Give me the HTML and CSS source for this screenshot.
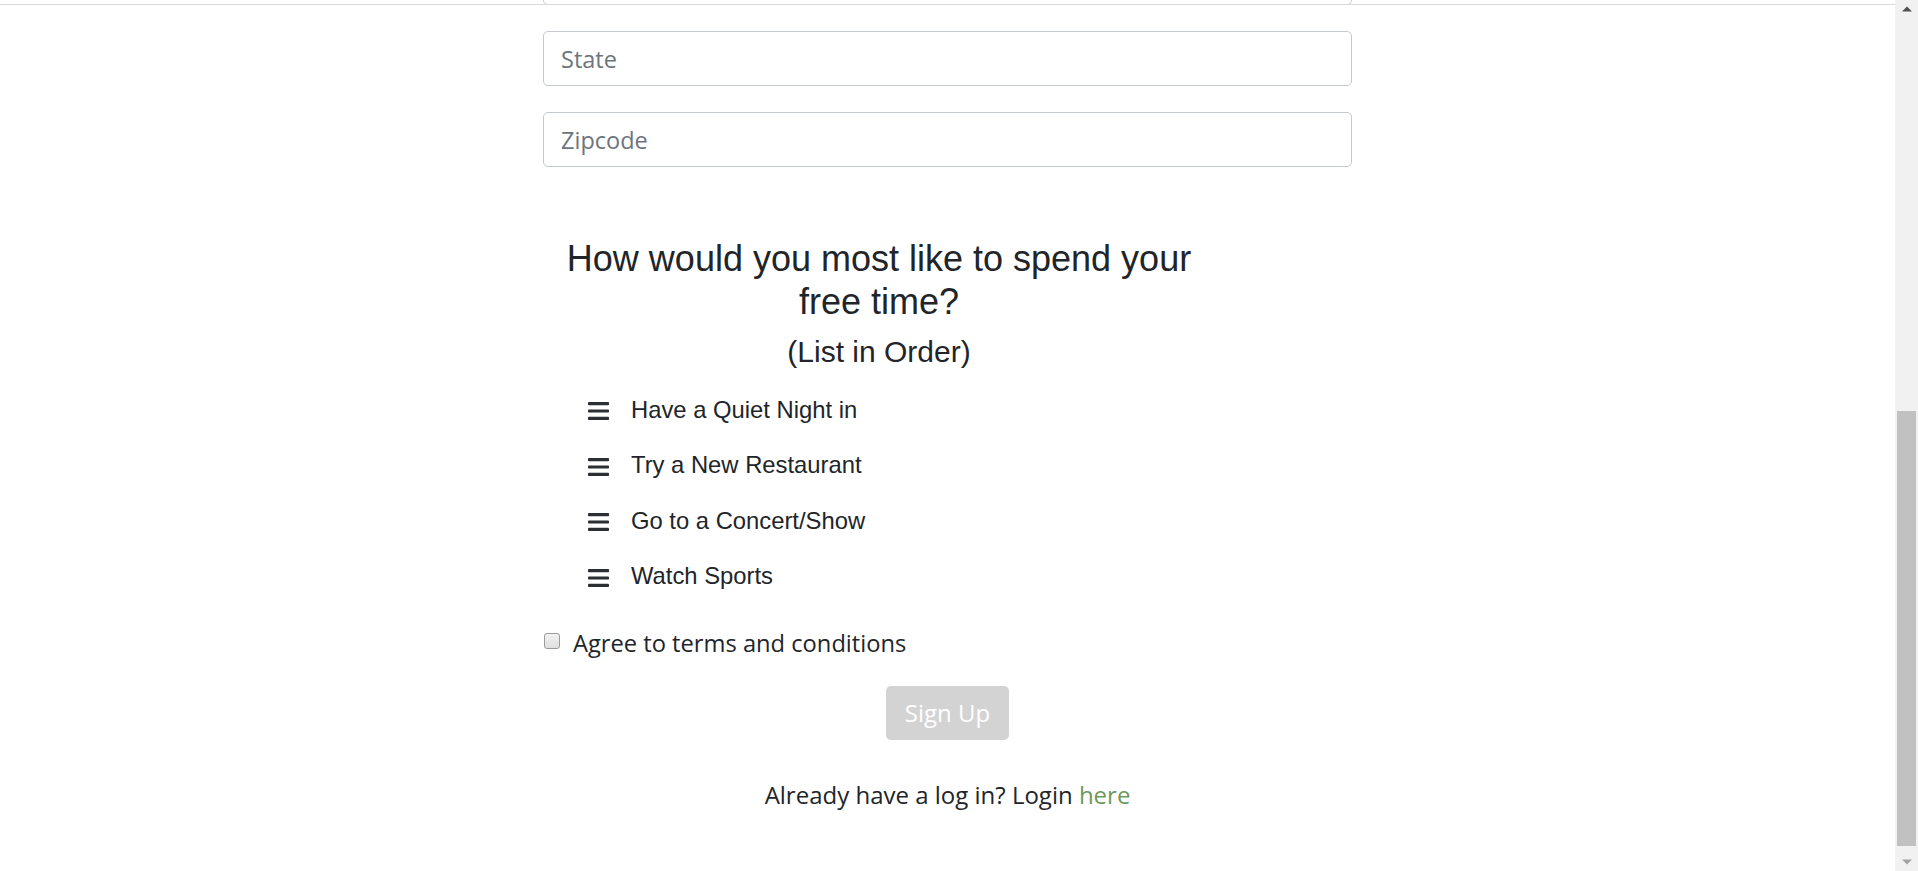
FILE: index.html
```html
<!DOCTYPE html>
<html lang="en">
<head>
<meta charset="utf-8">
<title>Sign Up</title>
<link rel="stylesheet" href="styles.css">
</head>
<body>
<div class="window">
  <main class="page">
    <div class="chrome-line"></div>
    <form class="signup">
      <div class="field-stub"></div>
      <input class="field" type="text" placeholder="State">
      <input class="field" type="text" placeholder="Zipcode">

      <section class="ranking">
        <h2 class="ranking-title">How would you most like to spend your free time?</h2>
        <h3 class="ranking-sub">(List in Order)</h3>
        <ul class="rank-list">
          <li class="rank-item">
            <svg class="handle" width="21" height="18" viewBox="0 0 21 18"><rect x="0" y="0" width="21" height="3.2" rx="0.8"/><rect x="0" y="7.4" width="21" height="3.2" rx="0.8"/><rect x="0" y="14.8" width="21" height="3.2" rx="0.8"/></svg>
            <span>Have a Quiet Night in</span>
          </li>
          <li class="rank-item">
            <svg class="handle" width="21" height="18" viewBox="0 0 21 18"><rect x="0" y="0" width="21" height="3.2" rx="0.8"/><rect x="0" y="7.4" width="21" height="3.2" rx="0.8"/><rect x="0" y="14.8" width="21" height="3.2" rx="0.8"/></svg>
            <span>Try a New Restaurant</span>
          </li>
          <li class="rank-item">
            <svg class="handle" width="21" height="18" viewBox="0 0 21 18"><rect x="0" y="0" width="21" height="3.2" rx="0.8"/><rect x="0" y="7.4" width="21" height="3.2" rx="0.8"/><rect x="0" y="14.8" width="21" height="3.2" rx="0.8"/></svg>
            <span>Go to a Concert/Show</span>
          </li>
          <li class="rank-item">
            <svg class="handle" width="21" height="18" viewBox="0 0 21 18"><rect x="0" y="0" width="21" height="3.2" rx="0.8"/><rect x="0" y="7.4" width="21" height="3.2" rx="0.8"/><rect x="0" y="14.8" width="21" height="3.2" rx="0.8"/></svg>
            <span>Watch Sports</span>
          </li>
        </ul>
      </section>

      <label class="agree">
        <input class="agree-box" type="checkbox">
        <span>Agree to terms and conditions</span>
      </label>

      <div class="actions">
        <button class="btn-signup" type="button" disabled>Sign Up</button>
      </div>

      <p class="login-line">Already have a log in? Login <a class="login-link" href="#">here</a></p>
    </form>
  </main>
  <div class="scrollbar">
    <div class="sb-arrow sb-up"></div>
    <div class="sb-track"><div class="sb-thumb"></div></div>
    <div class="sb-arrow sb-down"></div>
  </div>
</div>
</body>
</html>
```

FILE: styles.css
```css
* { box-sizing: border-box; }

html, body {
  margin: 0;
  padding: 0;
  background: #fff;
  height: 871px;
  overflow: hidden;
}

body {
  font-family: "Open Sans", "Liberation Sans", sans-serif;
  color: #212529;
}

.window {
  display: flex;
  height: 871px;
}

.page {
  flex: 1;
  position: relative;
  overflow: hidden;
}

.chrome-line {
  position: absolute;
  left: 0;
  right: 0;
  top: 4px;
  height: 1px;
  background: #d9d9d9;
}

.signup {
  width: 809px;
  margin: 0 auto;
  display: flex;
  flex-direction: column;
}

.field-stub {
  height: 5px;
  border: 1px solid #cdd1d7;
  border-top: none;
  border-radius: 0 0 5px 5px;
}

.field {
  display: block;
  width: 100%;
  height: 55px;
  margin-top: 26px;
  padding: 0 17px;
  border: 1px solid #c4c9d0;
  border-radius: 5px;
  font-family: "Open Sans", "Liberation Sans", sans-serif;
  font-size: 23.5px;
  color: #495057;
  background: #fff;
  outline: none;
}

.field::placeholder {
  color: #6c757d;
}

.ranking {
  width: 672px;
  margin-top: 70px;
  font-family: "Liberation Sans", Arial, sans-serif;
}

.ranking-title {
  margin: 0;
  font-size: 36px;
  line-height: 43px;
  font-weight: 400;
  text-align: center;
  color: #212529;
}

.ranking-sub {
  margin: 11px 0 0;
  font-size: 30px;
  line-height: 36px;
  font-weight: 400;
  text-align: center;
  color: #212529;
}

.rank-list {
  list-style: none;
  margin: 12px 0 0;
  padding: 0 0 0 45px;
}

.rank-item {
  display: flex;
  align-items: center;
  gap: 22px;
  height: 55.5px;
  font-size: 23.8px;
  color: #212529;
}

.handle {
  fill: #2b2e33;
  flex: none;
  margin-top: 3px;
}

.agree {
  display: flex;
  align-items: center;
  gap: 13px;
  margin-top: 24px;
  height: 30px;
  font-size: 23.7px;
  line-height: 30px;
  color: #212529;
}

.agree-box {
  appearance: none;
  -webkit-appearance: none;
  width: 16px;
  height: 16px;
  margin: -4px 0 0 1px;
  border: 1px solid #9a9a9a;
  border-radius: 3px;
  background: linear-gradient(#f2f2f2, #dedede);
}

.actions {
  display: flex;
  justify-content: center;
  margin-top: 28px;
}

.btn-signup {
  height: 54px;
  padding: 0 19px;
  border: none;
  border-radius: 5px;
  background: #d3d3d3;
  color: #fff;
  font-family: "Open Sans", "Liberation Sans", sans-serif;
  font-size: 24px;
  line-height: 54px;
}

.login-line {
  margin: 40px 0 0;
  text-align: center;
  font-size: 24px;
  line-height: 30px;
  color: #212529;
}

.login-link {
  color: #6b9a5b;
  text-decoration: none;
}

.scrollbar {
  width: 23px;
  flex: none;
  background: #f1f1f1;
  display: flex;
  flex-direction: column;
}

.sb-arrow {
  height: 24px;
  position: relative;
}

.sb-up::after,
.sb-down::after {
  content: "";
  position: absolute;
  left: 50%;
  top: 50%;
  width: 0;
  height: 0;
  border-left: 5px solid transparent;
  border-right: 5px solid transparent;
  transform: translate(-50%, -50%);
}

.sb-up::after {
  border-bottom: 5px solid #505050;
  margin-top: -3px;
}

.sb-down::after {
  border-top: 5px solid #a3a3a3;
  margin-top: 3px;
}

.sb-track {
  flex: 1;
  position: relative;
}

.sb-thumb {
  position: absolute;
  left: 2px;
  right: 2px;
  top: 387px;
  bottom: 1px;
  background: #c1c1c1;
}
```
